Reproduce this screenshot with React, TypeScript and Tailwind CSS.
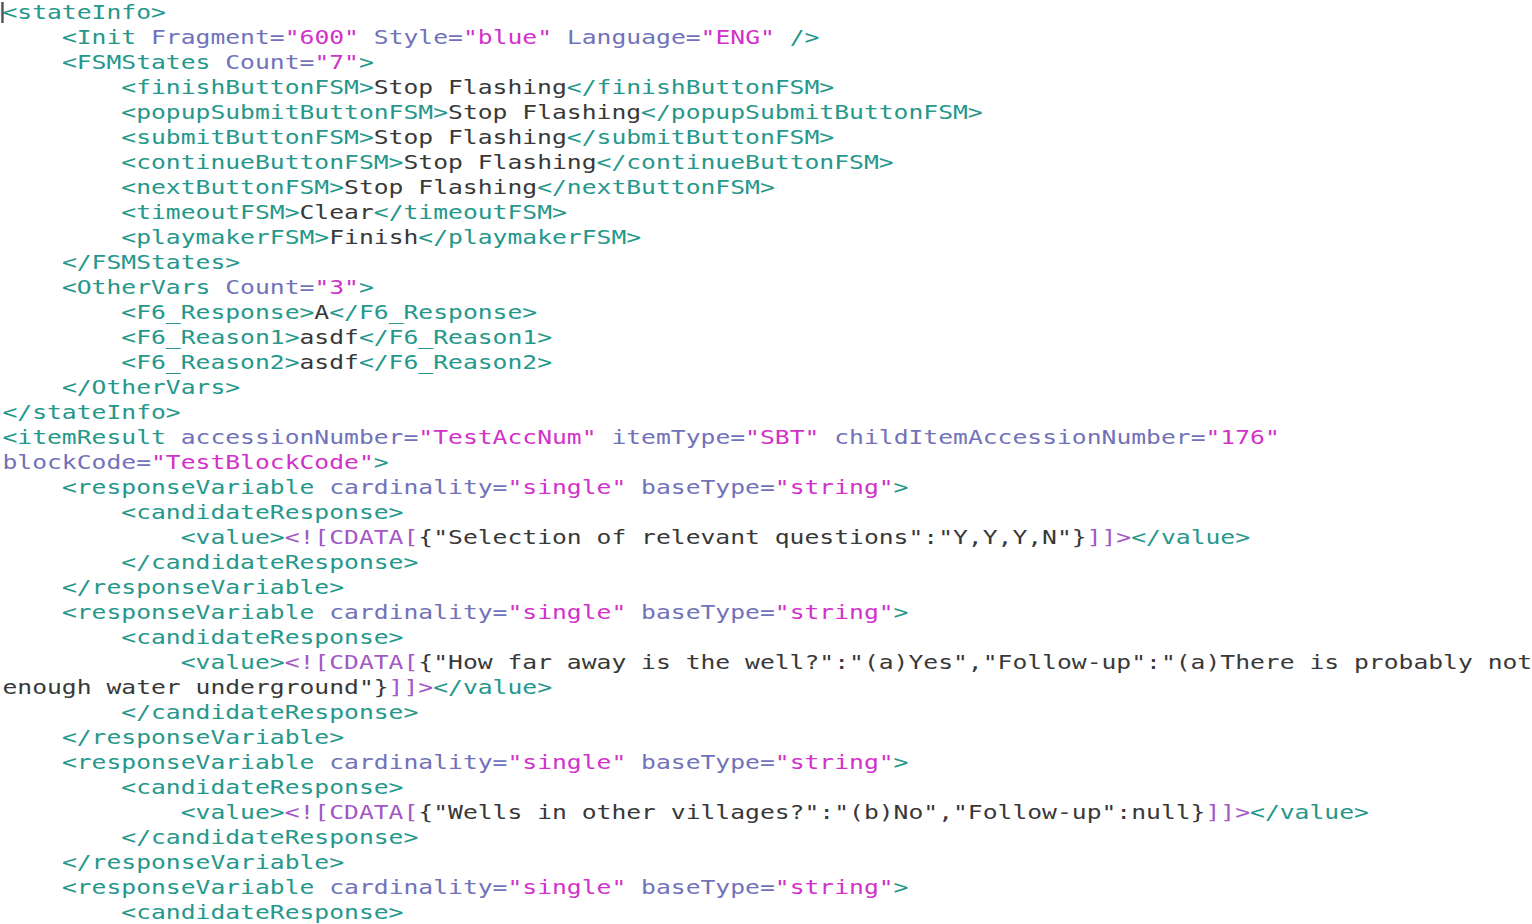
import { ReactNode } from "react";

type Mode = "text" | "tag" | "cdata";

const lines: string[] = [
  `<stateInfo>`,
  `    <Init Fragment="600" Style="blue" Language="ENG" />`,
  `    <FSMStates Count="7">`,
  `        <finishButtonFSM>Stop Flashing</finishButtonFSM>`,
  `        <popupSubmitButtonFSM>Stop Flashing</popupSubmitButtonFSM>`,
  `        <submitButtonFSM>Stop Flashing</submitButtonFSM>`,
  `        <continueButtonFSM>Stop Flashing</continueButtonFSM>`,
  `        <nextButtonFSM>Stop Flashing</nextButtonFSM>`,
  `        <timeoutFSM>Clear</timeoutFSM>`,
  `        <playmakerFSM>Finish</playmakerFSM>`,
  `    </FSMStates>`,
  `    <OtherVars Count="3">`,
  `        <F6_Response>A</F6_Response>`,
  `        <F6_Reason1>asdf</F6_Reason1>`,
  `        <F6_Reason2>asdf</F6_Reason2>`,
  `    </OtherVars>`,
  `</stateInfo>`,
  `<itemResult accessionNumber="TestAccNum" itemType="SBT" childItemAccessionNumber="176"`,
  `blockCode="TestBlockCode">`,
  `    <responseVariable cardinality="single" baseType="string">`,
  `        <candidateResponse>`,
  `            <value><![CDATA[{"Selection of relevant questions":"Y,Y,Y,N"}]]></value>`,
  `        </candidateResponse>`,
  `    </responseVariable>`,
  `    <responseVariable cardinality="single" baseType="string">`,
  `        <candidateResponse>`,
  `            <value><![CDATA[{"How far away is the well?":"(a)Yes","Follow-up":"(a)There is probably not`,
  `enough water underground"}]]></value>`,
  `        </candidateResponse>`,
  `    </responseVariable>`,
  `    <responseVariable cardinality="single" baseType="string">`,
  `        <candidateResponse>`,
  `            <value><![CDATA[{"Wells in other villages?":"(b)No","Follow-up":null}]]></value>`,
  `        </candidateResponse>`,
  `    </responseVariable>`,
  `    <responseVariable cardinality="single" baseType="string">`,
  `        <candidateResponse>`,
];

const colors = {
  tag: "text-[#25978b]",
  attr: "text-[#7172b9]",
  value: "text-[#d132c9]",
  cdata: "text-[#a457c6]",
  text: "text-[#383838]",
};

// tiny xml highlighter, keeps its mode from one line to the next
const highlight = (all: string[]) => {
  let mode: Mode = "text";
  return all.map((line) => {
    const out: ReactNode[] = [];
    let i = 0;
    const push = (s: string, c: keyof typeof colors) =>
      out.push(
        <span key={out.length} className={colors[c]}>
          {s}
        </span>
      );
    while (i < line.length) {
      const rest = line.slice(i);
      if (mode === "cdata") {
        if (rest.startsWith("]]>")) {
          push("]]>", "cdata");
          i += 3;
          mode = "text";
        } else {
          const end = rest.indexOf("]]>");
          const s = end === -1 ? rest : rest.slice(0, end);
          push(s, "text");
          i += s.length;
        }
      } else if (mode === "tag") {
        const m =
          rest.match(/^\s+/) ||
          rest.match(/^\/?>/) ||
          rest.match(/^"[^"]*"/) ||
          rest.match(/^=/) ||
          rest.match(/^[\w:-]+/);
        const s = m ? m[0] : rest[0];
        if (/^\s/.test(s)) push(s, "text");
        else if (/^\/?>/.test(s)) {
          push(s, "tag");
          mode = "text";
        } else if (s.startsWith('"')) push(s, "value");
        else push(s, "attr");
        i += s.length;
      } else {
        if (rest.startsWith("<![CDATA[")) {
          push("<![CDATA[", "cdata");
          i += 9;
          mode = "cdata";
        } else if (rest.startsWith("<")) {
          const m = rest.match(/^<\/?[\w:-]+/);
          const s = m ? m[0] : "<";
          push(s, "tag");
          i += s.length;
          mode = "tag";
          if (rest.slice(s.length).startsWith(">")) {
            push(">", "tag");
            i += 1;
            mode = "text";
          }
        } else {
          const end = rest.indexOf("<");
          const s = end === -1 ? rest : rest.slice(0, end);
          push(s, "text");
          i += s.length;
        }
      }
    }
    return out;
  });
};

export default function App() {
  const rows = highlight(lines);
  return (
    <div className="w-[1532px] h-[924px] overflow-hidden bg-white">
      <div className="relative pl-[2px] origin-top-left scale-x-[1.2334] font-['DejaVu_Sans_Mono','Liberation_Mono',monospace] text-[20px] leading-[25px] whitespace-pre">
        {/* caret */}
        <span className="absolute left-[1px] top-[2px] h-[21px] w-[1.5px] bg-[#555]" />
        {rows.map((r, idx) => (
          <div key={idx} className="h-[25px]">
            {r}
          </div>
        ))}
      </div>
    </div>
  );
}
